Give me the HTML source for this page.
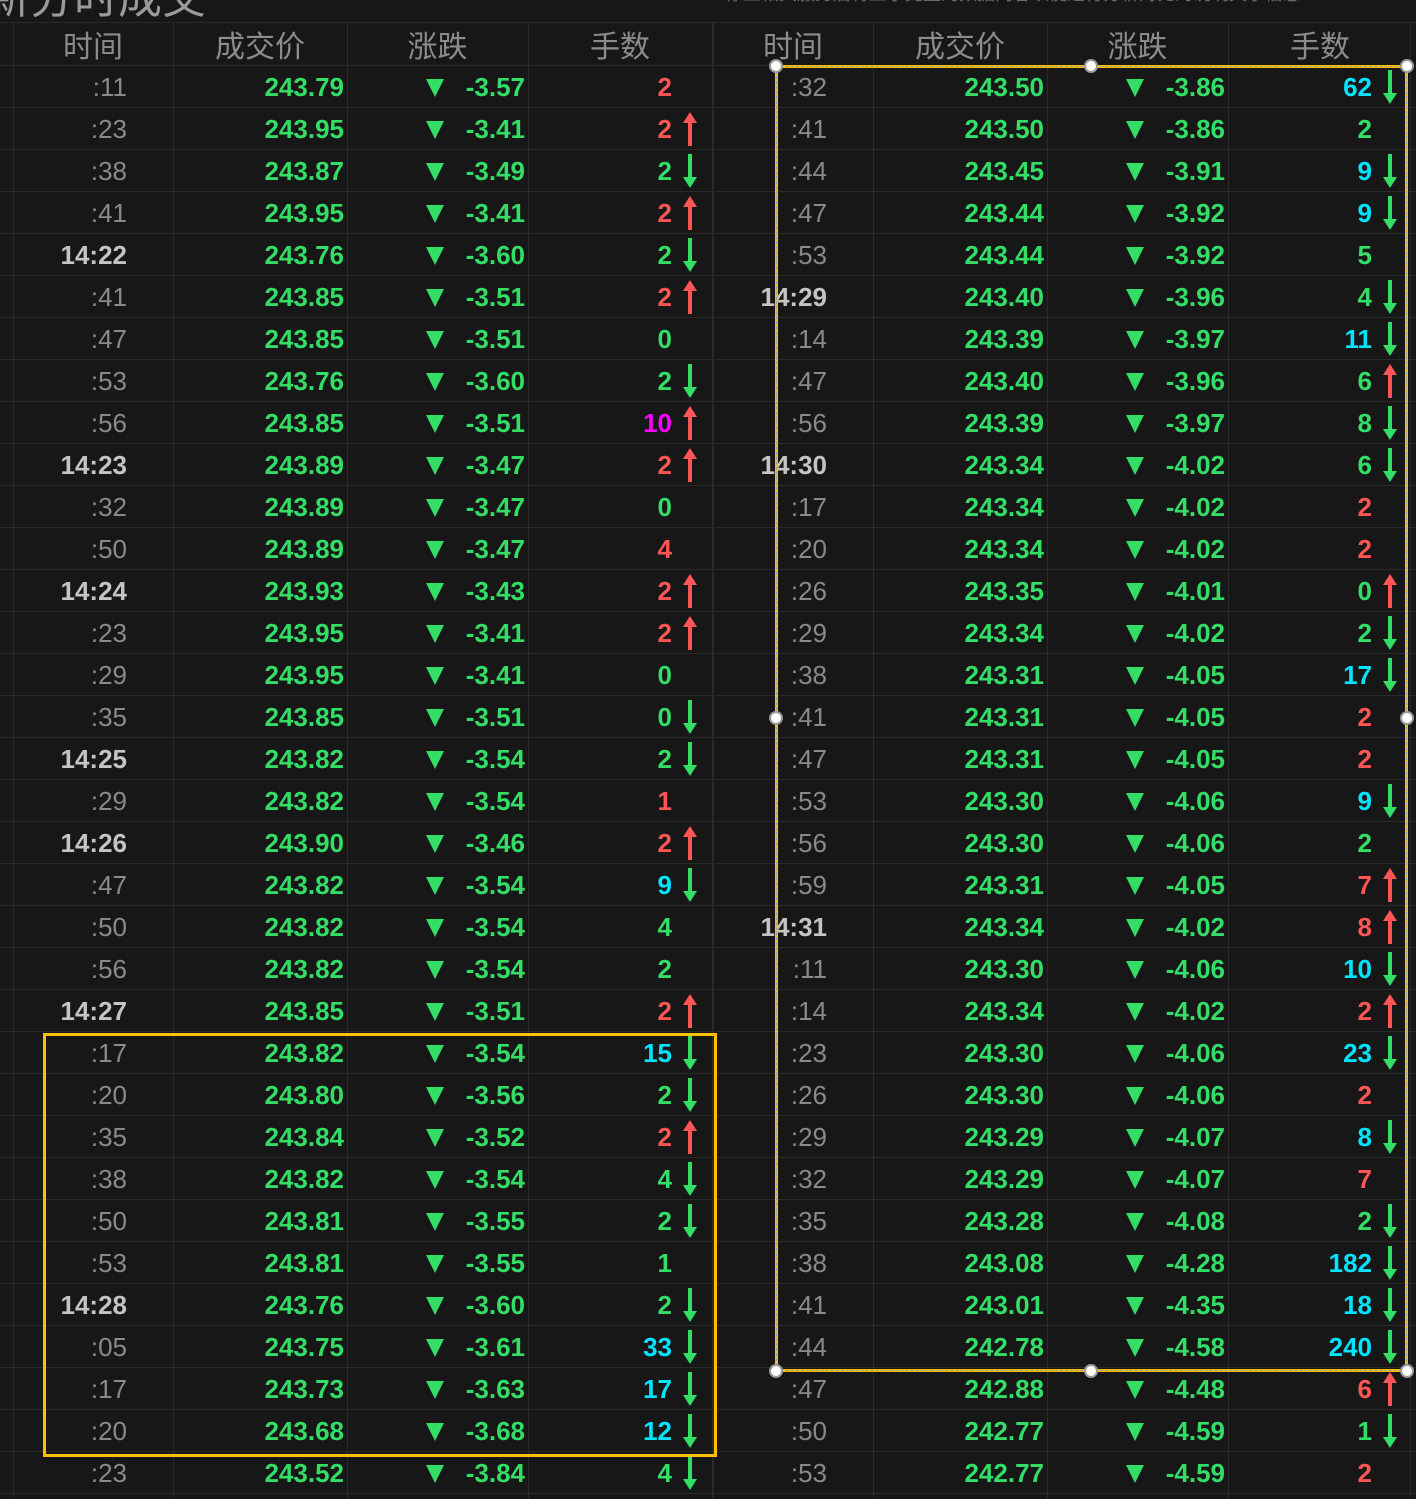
<!DOCTYPE html>
<html><head><meta charset="utf-8"><style>
*{margin:0;padding:0;box-sizing:border-box}
body{width:1416px;height:1498px;background:#171717;overflow:hidden;position:relative;font-family:"Liberation Sans","Noto Sans CJK SC",sans-serif}
.pn{position:absolute;top:0;width:716px;height:1498px}
.vl{position:absolute;top:22px;bottom:0;width:1px;background:#2a2a2a}
.hl{position:absolute;left:0;width:716px;height:1px;background:#2a2a2a}
.h{position:absolute;top:22px;height:44px;line-height:44px;font-size:30px;color:#8c8c8c;font-family:"Noto Sans CJK SC",sans-serif;text-align:center}
.r{position:absolute;left:0;width:716px;height:42px;line-height:42px;font-size:26px;font-weight:bold}
.r span{position:absolute;top:0;left:0;text-align:right;white-space:nowrap}
.t{width:127px;color:#8a8a8a;font-weight:normal}
.t.k{color:#c4c4c4;font-weight:bold}
.p{width:344px;color:#33dd66}
.c{width:525px;color:#33dd66}
.v{width:672px}
.x{position:absolute;left:426px;top:13px;width:0;height:0;border-left:9px solid transparent;border-right:9px solid transparent;border-top:18px solid #33dd66}
.G{color:#33dd66}.R{color:#ff5555}.C{color:#00e5ff}.M{color:#ff00ff}
.dn,.up{position:absolute;left:683px;top:4px;width:14px;height:34px}
.dn:before{content:"";position:absolute;left:5px;top:0;width:4px;height:24px;background:#33dd66}
.dn:after{content:"";position:absolute;left:0;bottom:0;border-left:7px solid transparent;border-right:7px solid transparent;border-top:11px solid #33dd66}
.up:before{content:"";position:absolute;left:5px;bottom:0;width:4px;height:24px;background:#ff5555}
.up:after{content:"";position:absolute;left:0;top:0;border-left:7px solid transparent;border-right:7px solid transparent;border-bottom:11px solid #ff5555}
.hd{position:absolute;width:14px;height:14px;border-radius:50%;background:#fff;border:2px solid #999;transform:translate(-7px,-7px)}
</style></head><body>
<div style="position:absolute;left:-14px;top:-38px;font-size:44px;color:#9a9a9a;font-family:'Noto Sans CJK SC',sans-serif">新分时成交</div>
<div style="position:absolute;left:725px;top:-20px;font-size:18px;color:#6a6a6a;font-family:'Noto Sans CJK SC',sans-serif;white-space:nowrap">停止相关服务后将显示完整的数据内容以便进行分析对比的说明文字信息</div>

<div class="pn" style="left:0">
<div class="hl" style="top:22px"></div><div class="hl" style="top:65px"></div>
<div class="vl" style="left:13px"></div><div class="vl" style="left:173px"></div><div class="vl" style="left:347px"></div><div class="vl" style="left:528px"></div><div class="vl" style="left:712px"></div>
<div class="h" style="left:13px;width:160px">时间</div><div class="h" style="left:173px;width:174px">成交价</div><div class="h" style="left:347px;width:181px">涨跌</div><div class="h" style="left:528px;width:184px">手数</div>
<div class="r" style="top:66px"><span class="t">:11</span><span class="p">243.79</span><i class="x"></i><span class="c">-3.57</span><span class="v R">2</span></div>
<div class="r" style="top:108px"><span class="t">:23</span><span class="p">243.95</span><i class="x"></i><span class="c">-3.41</span><span class="v R">2</span><i class="up"></i></div>
<div class="r" style="top:150px"><span class="t">:38</span><span class="p">243.87</span><i class="x"></i><span class="c">-3.49</span><span class="v G">2</span><i class="dn"></i></div>
<div class="r" style="top:192px"><span class="t">:41</span><span class="p">243.95</span><i class="x"></i><span class="c">-3.41</span><span class="v R">2</span><i class="up"></i></div>
<div class="r" style="top:234px"><span class="t k">14:22</span><span class="p">243.76</span><i class="x"></i><span class="c">-3.60</span><span class="v G">2</span><i class="dn"></i></div>
<div class="r" style="top:276px"><span class="t">:41</span><span class="p">243.85</span><i class="x"></i><span class="c">-3.51</span><span class="v R">2</span><i class="up"></i></div>
<div class="r" style="top:318px"><span class="t">:47</span><span class="p">243.85</span><i class="x"></i><span class="c">-3.51</span><span class="v G">0</span></div>
<div class="r" style="top:360px"><span class="t">:53</span><span class="p">243.76</span><i class="x"></i><span class="c">-3.60</span><span class="v G">2</span><i class="dn"></i></div>
<div class="r" style="top:402px"><span class="t">:56</span><span class="p">243.85</span><i class="x"></i><span class="c">-3.51</span><span class="v M">10</span><i class="up"></i></div>
<div class="r" style="top:444px"><span class="t k">14:23</span><span class="p">243.89</span><i class="x"></i><span class="c">-3.47</span><span class="v R">2</span><i class="up"></i></div>
<div class="r" style="top:486px"><span class="t">:32</span><span class="p">243.89</span><i class="x"></i><span class="c">-3.47</span><span class="v G">0</span></div>
<div class="r" style="top:528px"><span class="t">:50</span><span class="p">243.89</span><i class="x"></i><span class="c">-3.47</span><span class="v R">4</span></div>
<div class="r" style="top:570px"><span class="t k">14:24</span><span class="p">243.93</span><i class="x"></i><span class="c">-3.43</span><span class="v R">2</span><i class="up"></i></div>
<div class="r" style="top:612px"><span class="t">:23</span><span class="p">243.95</span><i class="x"></i><span class="c">-3.41</span><span class="v R">2</span><i class="up"></i></div>
<div class="r" style="top:654px"><span class="t">:29</span><span class="p">243.95</span><i class="x"></i><span class="c">-3.41</span><span class="v G">0</span></div>
<div class="r" style="top:696px"><span class="t">:35</span><span class="p">243.85</span><i class="x"></i><span class="c">-3.51</span><span class="v G">0</span><i class="dn"></i></div>
<div class="r" style="top:738px"><span class="t k">14:25</span><span class="p">243.82</span><i class="x"></i><span class="c">-3.54</span><span class="v G">2</span><i class="dn"></i></div>
<div class="r" style="top:780px"><span class="t">:29</span><span class="p">243.82</span><i class="x"></i><span class="c">-3.54</span><span class="v R">1</span></div>
<div class="r" style="top:822px"><span class="t k">14:26</span><span class="p">243.90</span><i class="x"></i><span class="c">-3.46</span><span class="v R">2</span><i class="up"></i></div>
<div class="r" style="top:864px"><span class="t">:47</span><span class="p">243.82</span><i class="x"></i><span class="c">-3.54</span><span class="v C">9</span><i class="dn"></i></div>
<div class="r" style="top:906px"><span class="t">:50</span><span class="p">243.82</span><i class="x"></i><span class="c">-3.54</span><span class="v G">4</span></div>
<div class="r" style="top:948px"><span class="t">:56</span><span class="p">243.82</span><i class="x"></i><span class="c">-3.54</span><span class="v G">2</span></div>
<div class="r" style="top:990px"><span class="t k">14:27</span><span class="p">243.85</span><i class="x"></i><span class="c">-3.51</span><span class="v R">2</span><i class="up"></i></div>
<div class="r" style="top:1032px"><span class="t">:17</span><span class="p">243.82</span><i class="x"></i><span class="c">-3.54</span><span class="v C">15</span><i class="dn"></i></div>
<div class="r" style="top:1074px"><span class="t">:20</span><span class="p">243.80</span><i class="x"></i><span class="c">-3.56</span><span class="v G">2</span><i class="dn"></i></div>
<div class="r" style="top:1116px"><span class="t">:35</span><span class="p">243.84</span><i class="x"></i><span class="c">-3.52</span><span class="v R">2</span><i class="up"></i></div>
<div class="r" style="top:1158px"><span class="t">:38</span><span class="p">243.82</span><i class="x"></i><span class="c">-3.54</span><span class="v G">4</span><i class="dn"></i></div>
<div class="r" style="top:1200px"><span class="t">:50</span><span class="p">243.81</span><i class="x"></i><span class="c">-3.55</span><span class="v G">2</span><i class="dn"></i></div>
<div class="r" style="top:1242px"><span class="t">:53</span><span class="p">243.81</span><i class="x"></i><span class="c">-3.55</span><span class="v G">1</span></div>
<div class="r" style="top:1284px"><span class="t k">14:28</span><span class="p">243.76</span><i class="x"></i><span class="c">-3.60</span><span class="v G">2</span><i class="dn"></i></div>
<div class="r" style="top:1326px"><span class="t">:05</span><span class="p">243.75</span><i class="x"></i><span class="c">-3.61</span><span class="v C">33</span><i class="dn"></i></div>
<div class="r" style="top:1368px"><span class="t">:17</span><span class="p">243.73</span><i class="x"></i><span class="c">-3.63</span><span class="v C">17</span><i class="dn"></i></div>
<div class="r" style="top:1410px"><span class="t">:20</span><span class="p">243.68</span><i class="x"></i><span class="c">-3.68</span><span class="v C">12</span><i class="dn"></i></div>
<div class="r" style="top:1452px"><span class="t">:23</span><span class="p">243.52</span><i class="x"></i><span class="c">-3.84</span><span class="v G">4</span><i class="dn"></i></div>
</div>

<div class="pn" style="left:700px">
<div class="hl" style="top:22px"></div><div class="hl" style="top:65px"></div>
<div class="vl" style="left:13px"></div><div class="vl" style="left:173px"></div><div class="vl" style="left:347px"></div><div class="vl" style="left:528px"></div><div class="vl" style="left:710px"></div>
<div class="h" style="left:13px;width:160px">时间</div><div class="h" style="left:173px;width:174px">成交价</div><div class="h" style="left:347px;width:181px">涨跌</div><div class="h" style="left:528px;width:184px">手数</div>
<div class="r" style="top:66px"><span class="t">:32</span><span class="p">243.50</span><i class="x"></i><span class="c">-3.86</span><span class="v C">62</span><i class="dn"></i></div>
<div class="r" style="top:108px"><span class="t">:41</span><span class="p">243.50</span><i class="x"></i><span class="c">-3.86</span><span class="v G">2</span></div>
<div class="r" style="top:150px"><span class="t">:44</span><span class="p">243.45</span><i class="x"></i><span class="c">-3.91</span><span class="v C">9</span><i class="dn"></i></div>
<div class="r" style="top:192px"><span class="t">:47</span><span class="p">243.44</span><i class="x"></i><span class="c">-3.92</span><span class="v C">9</span><i class="dn"></i></div>
<div class="r" style="top:234px"><span class="t">:53</span><span class="p">243.44</span><i class="x"></i><span class="c">-3.92</span><span class="v G">5</span></div>
<div class="r" style="top:276px"><span class="t k">14:29</span><span class="p">243.40</span><i class="x"></i><span class="c">-3.96</span><span class="v G">4</span><i class="dn"></i></div>
<div class="r" style="top:318px"><span class="t">:14</span><span class="p">243.39</span><i class="x"></i><span class="c">-3.97</span><span class="v C">11</span><i class="dn"></i></div>
<div class="r" style="top:360px"><span class="t">:47</span><span class="p">243.40</span><i class="x"></i><span class="c">-3.96</span><span class="v G">6</span><i class="up"></i></div>
<div class="r" style="top:402px"><span class="t">:56</span><span class="p">243.39</span><i class="x"></i><span class="c">-3.97</span><span class="v G">8</span><i class="dn"></i></div>
<div class="r" style="top:444px"><span class="t k">14:30</span><span class="p">243.34</span><i class="x"></i><span class="c">-4.02</span><span class="v G">6</span><i class="dn"></i></div>
<div class="r" style="top:486px"><span class="t">:17</span><span class="p">243.34</span><i class="x"></i><span class="c">-4.02</span><span class="v R">2</span></div>
<div class="r" style="top:528px"><span class="t">:20</span><span class="p">243.34</span><i class="x"></i><span class="c">-4.02</span><span class="v R">2</span></div>
<div class="r" style="top:570px"><span class="t">:26</span><span class="p">243.35</span><i class="x"></i><span class="c">-4.01</span><span class="v G">0</span><i class="up"></i></div>
<div class="r" style="top:612px"><span class="t">:29</span><span class="p">243.34</span><i class="x"></i><span class="c">-4.02</span><span class="v G">2</span><i class="dn"></i></div>
<div class="r" style="top:654px"><span class="t">:38</span><span class="p">243.31</span><i class="x"></i><span class="c">-4.05</span><span class="v C">17</span><i class="dn"></i></div>
<div class="r" style="top:696px"><span class="t">:41</span><span class="p">243.31</span><i class="x"></i><span class="c">-4.05</span><span class="v R">2</span></div>
<div class="r" style="top:738px"><span class="t">:47</span><span class="p">243.31</span><i class="x"></i><span class="c">-4.05</span><span class="v R">2</span></div>
<div class="r" style="top:780px"><span class="t">:53</span><span class="p">243.30</span><i class="x"></i><span class="c">-4.06</span><span class="v C">9</span><i class="dn"></i></div>
<div class="r" style="top:822px"><span class="t">:56</span><span class="p">243.30</span><i class="x"></i><span class="c">-4.06</span><span class="v G">2</span></div>
<div class="r" style="top:864px"><span class="t">:59</span><span class="p">243.31</span><i class="x"></i><span class="c">-4.05</span><span class="v R">7</span><i class="up"></i></div>
<div class="r" style="top:906px"><span class="t k">14:31</span><span class="p">243.34</span><i class="x"></i><span class="c">-4.02</span><span class="v R">8</span><i class="up"></i></div>
<div class="r" style="top:948px"><span class="t">:11</span><span class="p">243.30</span><i class="x"></i><span class="c">-4.06</span><span class="v C">10</span><i class="dn"></i></div>
<div class="r" style="top:990px"><span class="t">:14</span><span class="p">243.34</span><i class="x"></i><span class="c">-4.02</span><span class="v R">2</span><i class="up"></i></div>
<div class="r" style="top:1032px"><span class="t">:23</span><span class="p">243.30</span><i class="x"></i><span class="c">-4.06</span><span class="v C">23</span><i class="dn"></i></div>
<div class="r" style="top:1074px"><span class="t">:26</span><span class="p">243.30</span><i class="x"></i><span class="c">-4.06</span><span class="v R">2</span></div>
<div class="r" style="top:1116px"><span class="t">:29</span><span class="p">243.29</span><i class="x"></i><span class="c">-4.07</span><span class="v C">8</span><i class="dn"></i></div>
<div class="r" style="top:1158px"><span class="t">:32</span><span class="p">243.29</span><i class="x"></i><span class="c">-4.07</span><span class="v R">7</span></div>
<div class="r" style="top:1200px"><span class="t">:35</span><span class="p">243.28</span><i class="x"></i><span class="c">-4.08</span><span class="v G">2</span><i class="dn"></i></div>
<div class="r" style="top:1242px"><span class="t">:38</span><span class="p">243.08</span><i class="x"></i><span class="c">-4.28</span><span class="v C">182</span><i class="dn"></i></div>
<div class="r" style="top:1284px"><span class="t">:41</span><span class="p">243.01</span><i class="x"></i><span class="c">-4.35</span><span class="v C">18</span><i class="dn"></i></div>
<div class="r" style="top:1326px"><span class="t">:44</span><span class="p">242.78</span><i class="x"></i><span class="c">-4.58</span><span class="v C">240</span><i class="dn"></i></div>
<div class="r" style="top:1368px"><span class="t">:47</span><span class="p">242.88</span><i class="x"></i><span class="c">-4.48</span><span class="v R">6</span><i class="up"></i></div>
<div class="r" style="top:1410px"><span class="t">:50</span><span class="p">242.77</span><i class="x"></i><span class="c">-4.59</span><span class="v G">1</span><i class="dn"></i></div>
<div class="r" style="top:1452px"><span class="t">:53</span><span class="p">242.77</span><i class="x"></i><span class="c">-4.59</span><span class="v R">2</span></div>
</div>

<div style="position:absolute;left:0;top:107px;width:1416px;height:1392px;background:repeating-linear-gradient(to bottom,#2a2a2a 0,#2a2a2a 1px,transparent 1px,transparent 42px);pointer-events:none"></div>

<div style="position:absolute;left:43px;top:1033px;width:674px;height:424px;border:3px solid #ffc000"></div>
<div style="position:absolute;left:775px;top:65px;width:633px;height:1307px;border:3px solid #ffc000"></div>
<div style="position:absolute;left:776px;top:66px;width:631px;height:1305px;border:1px dashed #9a9a9a"></div>
<div class="hd" style="left:776px;top:66px"></div><div class="hd" style="left:1091px;top:66px"></div><div class="hd" style="left:1407px;top:66px"></div>
<div class="hd" style="left:776px;top:718px"></div><div class="hd" style="left:1407px;top:718px"></div>
<div class="hd" style="left:776px;top:1371px"></div><div class="hd" style="left:1091px;top:1371px"></div><div class="hd" style="left:1407px;top:1371px"></div>
</body></html>
